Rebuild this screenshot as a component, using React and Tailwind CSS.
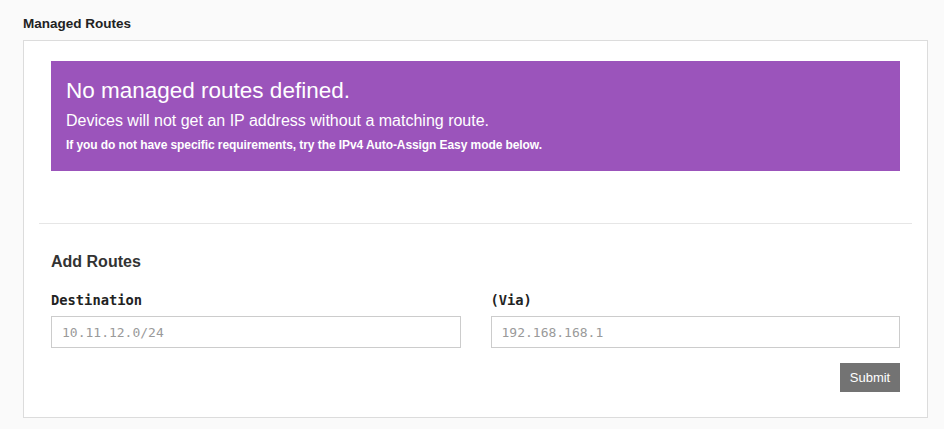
export default function App() {
  return (
    <div className="min-h-[429px] bg-[#fafafa] px-[23px] pt-[16px] pb-[12px] font-['Liberation_Sans',Arial,sans-serif]">
      <h2 className="text-[13.5px] font-bold leading-[16px] text-[#222]">Managed Routes</h2>
      <div className="mt-[8px] w-[905px] border border-[#dcdcdc] bg-white px-[15px] pt-[20px] pb-[25px]">
        <div className="mx-3 h-[110px] bg-[#9b54bb] px-[15px] pt-[16px] text-white">
          <h3 className="text-[22.5px] leading-[28px]">No managed routes defined.</h3>
          <p className="mt-[7px] text-[16px] leading-[18px]">Devices will not get an IP address without a matching route.</p>
          <p className="mt-[7px] text-[12px] font-bold leading-[16px] tracking-[-0.08px]">
            If you do not have specific requirements, try the IPv4 Auto-Assign Easy mode below.
          </p>
        </div>
        <div className="mt-[52px] border-t border-[#e6e6e6]" />
        <div className="px-3 pt-[29px]">
          <h3 className="text-[16px] font-bold leading-[18px] text-[#333]">Add Routes</h3>
          <div className="mt-[21px] grid grid-cols-2 gap-[30px]">
            <div>
              <label className="block font-['DejaVu_Sans_Mono',monospace] text-[13.75px] font-bold leading-[17px] text-[#222]">
                Destination
              </label>
              <input
                placeholder="10.11.12.0/24"
                className="mt-[7px] block h-[32px] w-full border border-[#cccccc] px-[10px] font-['DejaVu_Sans_Mono',monospace] text-[13px] text-[#333] outline-none placeholder:text-[#9a9a9a]"
              />
            </div>
            <div>
              <label className="block font-['DejaVu_Sans_Mono',monospace] text-[13.75px] font-bold leading-[17px] text-[#222]">
                (Via)
              </label>
              <input
                placeholder="192.168.168.1"
                className="mt-[7px] block h-[32px] w-full border border-[#cccccc] px-[10px] font-['DejaVu_Sans_Mono',monospace] text-[13px] text-[#333] outline-none placeholder:text-[#9a9a9a]"
              />
            </div>
          </div>
          <div className="mt-[15px] flex justify-end">
            <button className="h-[29px] w-[60px] bg-[#737373] text-[13px] text-white">Submit</button>
          </div>
        </div>
      </div>
    </div>
  );
}
